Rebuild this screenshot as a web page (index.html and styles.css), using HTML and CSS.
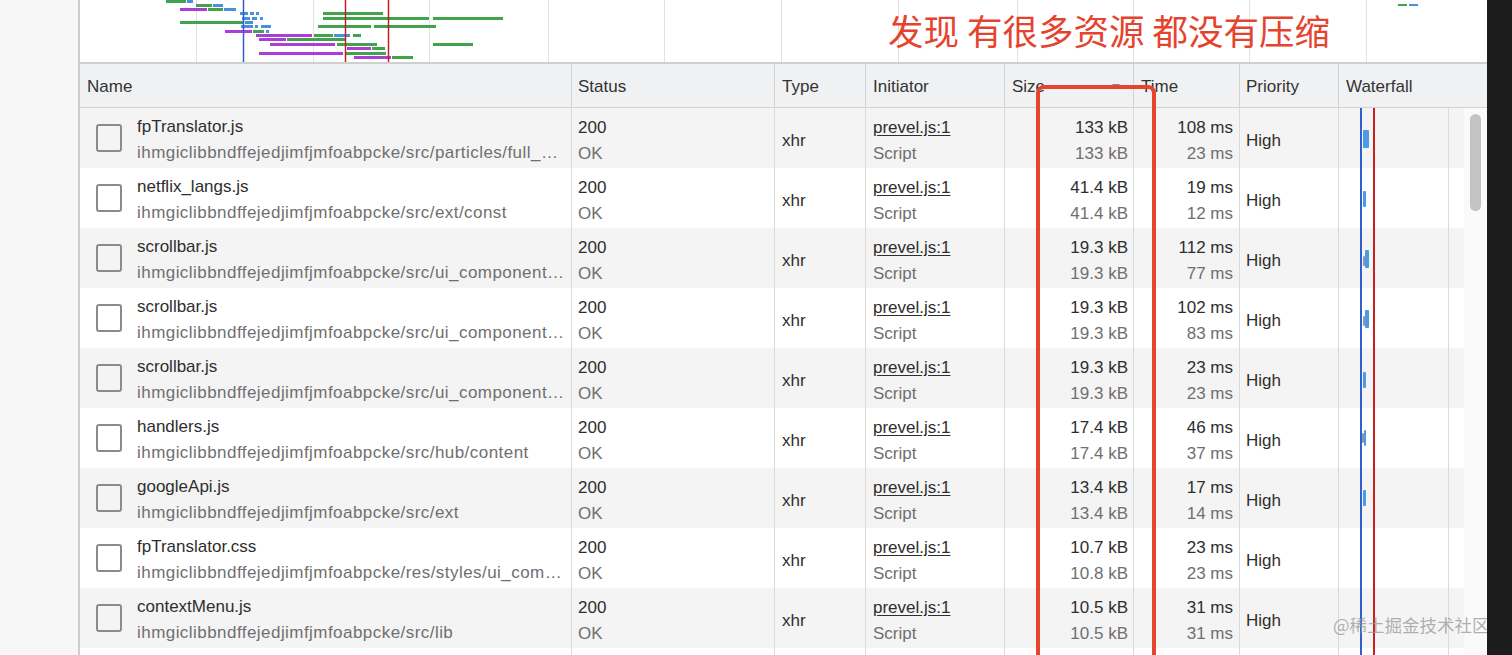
FILE: index.html
```html
<!DOCTYPE html>
<html lang="zh-CN">
<head>
    <meta charset="UTF-8">
    <title>Network</title>
    <link rel="stylesheet" href="styles.css">
</head>
<body>
<div class="page">
    <aside class="sidebar"></aside>

    <main class="panel">
        <div class="overview">
            <svg class="overview-chart" width="1407" height="62" viewBox="0 0 1407 62">
                <g stroke="#e2e2e2" stroke-width="1">
                    <line x1="116.5" y1="0" x2="116.5" y2="62"/>
                    <line x1="233.5" y1="0" x2="233.5" y2="62"/>
                    <line x1="349.5" y1="0" x2="349.5" y2="62"/>
                    <line x1="468.5" y1="0" x2="468.5" y2="62"/>
                    <line x1="584.5" y1="0" x2="584.5" y2="62"/>
                    <line x1="701.5" y1="0" x2="701.5" y2="62"/>
                    <line x1="818.5" y1="0" x2="818.5" y2="62"/>
                    <line x1="937.5" y1="0" x2="937.5" y2="62"/>
                    <line x1="1053.5" y1="0" x2="1053.5" y2="62"/>
                    <line x1="1169.5" y1="0" x2="1169.5" y2="62"/>
                    <line x1="1286.5" y1="0" x2="1286.5" y2="62"/>
                </g>
                <!-- green = waiting, blue = download, purple = queueing -->
                <g fill="#43a34c">
                    <rect x="86" y="0" width="20" height="3"/>
                    <rect x="116" y="4" width="16" height="3"/>
                    <rect x="128" y="8" width="15" height="3"/>
                    <rect x="243" y="12" width="60" height="3"/>
                    <rect x="243" y="17" width="106" height="3"/>
                    <rect x="353" y="17" width="70" height="3"/>
                    <rect x="100" y="21" width="63" height="3"/>
                    <rect x="238" y="25" width="53" height="3"/>
                    <rect x="294" y="25" width="62" height="3"/>
                    <rect x="173" y="30" width="11" height="3"/>
                    <rect x="234" y="34" width="19" height="3"/>
                    <rect x="273" y="34" width="8" height="3"/>
                    <rect x="207" y="38" width="58" height="3"/>
                    <rect x="257" y="43" width="40" height="3"/>
                    <rect x="353" y="43" width="40" height="3"/>
                    <rect x="292" y="47" width="13" height="3"/>
                    <rect x="265" y="52" width="41" height="3"/>
                    <rect x="312" y="56" width="21" height="3"/>
                    <rect x="1318" y="4" width="9" height="2"/>
                </g>
                <g fill="#4a90de">
                    <rect x="107" y="0" width="6" height="3"/>
                    <rect x="133" y="4" width="10" height="3"/>
                    <rect x="144" y="8" width="12" height="3"/>
                    <rect x="160" y="12" width="8" height="3"/>
                    <rect x="170" y="12" width="4" height="3"/>
                    <rect x="176" y="12" width="3" height="3"/>
                    <rect x="162" y="17" width="8" height="3"/>
                    <rect x="172" y="17" width="5" height="3"/>
                    <rect x="180" y="17" width="3" height="3"/>
                    <rect x="165" y="21" width="8" height="3"/>
                    <rect x="161" y="25" width="12" height="3"/>
                    <rect x="175" y="25" width="3" height="3"/>
                    <rect x="181" y="25" width="10" height="3"/>
                    <rect x="186" y="30" width="3" height="3"/>
                    <rect x="254" y="34" width="16" height="3"/>
                    <rect x="1329" y="4" width="9" height="2"/>
                </g>
                <g fill="#aa3fd6">
                    <rect x="100" y="8" width="27" height="3"/>
                    <rect x="145" y="30" width="27" height="3"/>
                    <rect x="176" y="34" width="56" height="3"/>
                    <rect x="179" y="38" width="27" height="3"/>
                    <rect x="190" y="43" width="65" height="3"/>
                    <rect x="267" y="47" width="24" height="3"/>
                    <rect x="179" y="52" width="84" height="3"/>
                    <rect x="274" y="56" width="37" height="3"/>
                </g>
                <line x1="163.5" y1="0" x2="163.5" y2="62" stroke="#2c5fd0" stroke-width="1.5"/>
                <line x1="265.5" y1="0" x2="265.5" y2="62" stroke="#c2201f" stroke-width="1.5"/>
                <line x1="308.5" y1="0" x2="308.5" y2="62" stroke="#c2201f" stroke-width="1.5"/>
            </svg>
            <div class="note">发现 有很多资源 都没有压缩</div>
        </div>

        <div class="table">
            <div class="thead">
                <div class="th">Name</div>
                <div class="th">Status</div>
                <div class="th">Type</div>
                <div class="th">Initiator</div>
                <div class="th th-sorted">Size <span class="sort-arrow"></span></div>
                <div class="th">Time</div>
                <div class="th">Priority</div>
                <div class="th">Waterfall</div>
            </div>

            <div class="tbody">
                <div class="rows">
                    <div class="row">
                        <div class="cell name"><span class="check"></span><div class="two"><div class="main">fpTranslator.js</div><div class="sub path">ihmgiclibbndffejedjimfjmfoabpcke/src/particles/full_screen_translator</div></div></div>
                        <div class="cell"><div class="main">200</div><div class="sub">OK</div></div>
                        <div class="cell mid">xhr</div>
                        <div class="cell"><div class="main link">prevel.js:1</div><div class="sub">Script</div></div>
                        <div class="cell num"><div class="main">133 kB</div><div class="sub">133 kB</div></div>
                        <div class="cell num time"><div class="main">108 ms</div><div class="sub">23 ms</div></div>
                        <div class="cell mid">High</div>
                        <div class="cell wf"><span class="bar" style="left:24px;top:22px;width:6px;height:18px"></span></div>
                    </div>
                    <div class="row">
                        <div class="cell name"><span class="check"></span><div class="two"><div class="main">netflix_langs.js</div><div class="sub path">ihmgiclibbndffejedjimfjmfoabpcke/src/ext/const</div></div></div>
                        <div class="cell"><div class="main">200</div><div class="sub">OK</div></div>
                        <div class="cell mid">xhr</div>
                        <div class="cell"><div class="main link">prevel.js:1</div><div class="sub">Script</div></div>
                        <div class="cell num"><div class="main">41.4 kB</div><div class="sub">41.4 kB</div></div>
                        <div class="cell num time"><div class="main">19 ms</div><div class="sub">12 ms</div></div>
                        <div class="cell mid">High</div>
                        <div class="cell wf"><span class="bar" style="left:24px;top:23px;width:3px;height:16px"></span></div>
                    </div>
                    <div class="row">
                        <div class="cell name"><span class="check"></span><div class="two"><div class="main">scrollbar.js</div><div class="sub path">ihmgiclibbndffejedjimfjmfoabpcke/src/ui_components/scrollbar</div></div></div>
                        <div class="cell"><div class="main">200</div><div class="sub">OK</div></div>
                        <div class="cell mid">xhr</div>
                        <div class="cell"><div class="main link">prevel.js:1</div><div class="sub">Script</div></div>
                        <div class="cell num"><div class="main">19.3 kB</div><div class="sub">19.3 kB</div></div>
                        <div class="cell num time"><div class="main">112 ms</div><div class="sub">77 ms</div></div>
                        <div class="cell mid">High</div>
                        <div class="cell wf"><span class="bar wait" style="left:24px;top:28px;width:2px;height:10px"></span><span class="bar" style="left:26px;top:22px;width:4px;height:18px"></span></div>
                    </div>
                    <div class="row">
                        <div class="cell name"><span class="check"></span><div class="two"><div class="main">scrollbar.js</div><div class="sub path">ihmgiclibbndffejedjimfjmfoabpcke/src/ui_components/scrollbar</div></div></div>
                        <div class="cell"><div class="main">200</div><div class="sub">OK</div></div>
                        <div class="cell mid">xhr</div>
                        <div class="cell"><div class="main link">prevel.js:1</div><div class="sub">Script</div></div>
                        <div class="cell num"><div class="main">19.3 kB</div><div class="sub">19.3 kB</div></div>
                        <div class="cell num time"><div class="main">102 ms</div><div class="sub">83 ms</div></div>
                        <div class="cell mid">High</div>
                        <div class="cell wf"><span class="bar wait" style="left:24px;top:28px;width:2px;height:10px"></span><span class="bar" style="left:26px;top:22px;width:4px;height:18px"></span></div>
                    </div>
                    <div class="row">
                        <div class="cell name"><span class="check"></span><div class="two"><div class="main">scrollbar.js</div><div class="sub path">ihmgiclibbndffejedjimfjmfoabpcke/src/ui_components/scrollbar</div></div></div>
                        <div class="cell"><div class="main">200</div><div class="sub">OK</div></div>
                        <div class="cell mid">xhr</div>
                        <div class="cell"><div class="main link">prevel.js:1</div><div class="sub">Script</div></div>
                        <div class="cell num"><div class="main">19.3 kB</div><div class="sub">19.3 kB</div></div>
                        <div class="cell num time"><div class="main">23 ms</div><div class="sub">23 ms</div></div>
                        <div class="cell mid">High</div>
                        <div class="cell wf"><span class="bar" style="left:24px;top:24px;width:3px;height:16px"></span></div>
                    </div>
                    <div class="row">
                        <div class="cell name"><span class="check"></span><div class="two"><div class="main">handlers.js</div><div class="sub path">ihmgiclibbndffejedjimfjmfoabpcke/src/hub/content</div></div></div>
                        <div class="cell"><div class="main">200</div><div class="sub">OK</div></div>
                        <div class="cell mid">xhr</div>
                        <div class="cell"><div class="main link">prevel.js:1</div><div class="sub">Script</div></div>
                        <div class="cell num"><div class="main">17.4 kB</div><div class="sub">17.4 kB</div></div>
                        <div class="cell num time"><div class="main">46 ms</div><div class="sub">37 ms</div></div>
                        <div class="cell mid">High</div>
                        <div class="cell wf"><span class="bar wait" style="left:23px;top:25px;width:2px;height:10px"></span><span class="bar" style="left:25px;top:22px;width:2px;height:16px"></span></div>
                    </div>
                    <div class="row">
                        <div class="cell name"><span class="check"></span><div class="two"><div class="main">googleApi.js</div><div class="sub path">ihmgiclibbndffejedjimfjmfoabpcke/src/ext</div></div></div>
                        <div class="cell"><div class="main">200</div><div class="sub">OK</div></div>
                        <div class="cell mid">xhr</div>
                        <div class="cell"><div class="main link">prevel.js:1</div><div class="sub">Script</div></div>
                        <div class="cell num"><div class="main">13.4 kB</div><div class="sub">13.4 kB</div></div>
                        <div class="cell num time"><div class="main">17 ms</div><div class="sub">14 ms</div></div>
                        <div class="cell mid">High</div>
                        <div class="cell wf"><span class="bar" style="left:24px;top:22px;width:3px;height:16px"></span></div>
                    </div>
                    <div class="row">
                        <div class="cell name"><span class="check"></span><div class="two"><div class="main">fpTranslator.css</div><div class="sub path">ihmgiclibbndffejedjimfjmfoabpcke/res/styles/ui_components/translator</div></div></div>
                        <div class="cell"><div class="main">200</div><div class="sub">OK</div></div>
                        <div class="cell mid">xhr</div>
                        <div class="cell"><div class="main link">prevel.js:1</div><div class="sub">Script</div></div>
                        <div class="cell num"><div class="main">10.7 kB</div><div class="sub">10.8 kB</div></div>
                        <div class="cell num time"><div class="main">23 ms</div><div class="sub">23 ms</div></div>
                        <div class="cell mid">High</div>
                        <div class="cell wf"></div>
                    </div>
                    <div class="row">
                        <div class="cell name"><span class="check"></span><div class="two"><div class="main">contextMenu.js</div><div class="sub path">ihmgiclibbndffejedjimfjmfoabpcke/src/lib</div></div></div>
                        <div class="cell"><div class="main">200</div><div class="sub">OK</div></div>
                        <div class="cell mid">xhr</div>
                        <div class="cell"><div class="main link">prevel.js:1</div><div class="sub">Script</div></div>
                        <div class="cell num"><div class="main">10.5 kB</div><div class="sub">10.5 kB</div></div>
                        <div class="cell num time"><div class="main">31 ms</div><div class="sub">31 ms</div></div>
                        <div class="cell mid">High</div>
                        <div class="cell wf"></div>
                    </div>
                    <div class="row">
                        <div class="cell name"><span class="check"></span><div class="two"><div class="main">content.js</div><div class="sub path">ihmgiclibbndffejedjimfjmfoabpcke/src/hub</div></div></div>
                        <div class="cell"><div class="main">200</div><div class="sub">OK</div></div>
                        <div class="cell mid">xhr</div>
                        <div class="cell"><div class="main link">prevel.js:1</div><div class="sub">Script</div></div>
                        <div class="cell num"><div class="main">9.8 kB</div><div class="sub">9.8 kB</div></div>
                        <div class="cell num time"><div class="main">20 ms</div><div class="sub">18 ms</div></div>
                        <div class="cell mid">High</div>
                        <div class="cell wf"></div>
                    </div>
                </div>
                <div class="scrolltrack"><div class="thumb"></div></div>
            </div>

            <div class="mark-box"></div>
        </div>

        <div class="watermark">@稀土掘金技术社区</div>
    </main>

    <div class="edge"></div>
</div>
</body>
</html>
```

FILE: styles.css
```css
* {
    margin: 0;
    padding: 0;
    box-sizing: border-box;
}

body {
    width: 1512px;
    height: 655px;
    overflow: hidden;
    font-family: "Liberation Sans", Arial, "Noto Sans CJK SC", sans-serif;
    font-size: 17px;
    color: #2e2e2e;
    background: #fff;
}

.page {
    display: flex;
    height: 655px;
}

.sidebar {
    width: 80px;
    flex-shrink: 0;
    background: #f7f7f7;
    border-right: 2px solid #cdcdcd;
}

.panel {
    position: relative;
    width: 1407px;
    flex-shrink: 0;
    display: flex;
    flex-direction: column;
    overflow: hidden;
}

.edge {
    flex: 1;
    background: #1c1c1c;
}

/* overview strip */
.overview {
    position: relative;
    height: 64px;
    flex-shrink: 0;
    background: #fff;
    border-bottom: 2px solid #cfcfcf;
}

.overview-chart {
    display: block;
}

.note {
    position: absolute;
    left: 808px;
    top: 9px;
    font-family: "Noto Sans CJK SC", sans-serif;
    font-size: 35.5px;
    line-height: 42px;
    color: #e6432e;
    white-space: nowrap;
}

/* table */
.table {
    position: relative;
    flex: 1;
    display: flex;
    flex-direction: column;
}

.thead {
    display: grid;
    grid-template-columns: 492px 203px 91px 139px 129px 106px 99px 1fr;
    height: 44px;
    flex-shrink: 0;
    background: #f0f1f2;
    border-bottom: 1px solid #d2d2d2;
}

.th {
    display: flex;
    align-items: center;
    padding: 3px 0 0 7px;
    border-right: 1px solid #d2d2d2;
    color: #333;
    white-space: nowrap;
}

.th:nth-child(2),
.th:nth-child(7) {
    padding-left: 6px;
}

.th:last-child {
    border-right: none;
}

.th-sorted {
    justify-content: space-between;
    padding-right: 13px;
}

.sort-arrow {
    width: 0;
    height: 0;
    margin-bottom: 2px;
    border-left: 4px solid transparent;
    border-right: 4px solid transparent;
    border-top: 5px solid #8a8a8a;
}

.tbody {
    flex: 1;
    display: flex;
    overflow: hidden;
}

.rows {
    width: 1384px;
    flex-shrink: 0;
}

.row {
    display: grid;
    grid-template-columns: 492px 203px 91px 139px 129px 106px 99px 1fr;
    height: 60px;
    background: #fff;
}

.row:nth-child(odd) {
    background: #f4f4f4;
}

.cell {
    padding: 7px 6px 0 7px;
    border-right: 1px solid #dadada;
    line-height: 26px;
    white-space: nowrap;
    overflow: hidden;
    min-width: 0;
}

.cell:nth-child(2),
.cell:nth-child(7) {
    padding-left: 6px;
}

.cell .sub {
    color: #6f6f6f;
}

.link {
    text-decoration: underline;
    text-underline-offset: 2px;
}

.mid {
    display: flex;
    align-items: center;
    padding-top: 6px;
}

.num {
    text-align: right;
    padding-right: 5px;
}

.num.time {
    padding-right: 6px;
}

.name {
    display: flex;
    align-items: center;
    gap: 15px;
    padding: 0 6px 0 16px;
}

.check {
    width: 26px;
    height: 28px;
    flex-shrink: 0;
    border: 2px solid #8b8b8b;
    border-radius: 3px;
}

.two {
    min-width: 0;
    padding-top: 3px;
}

.two .main,
.two .sub {
    overflow: hidden;
    text-overflow: ellipsis;
}

.path {
    letter-spacing: 0.45px;
}

/* waterfall cell: grid line, DOMContentLoaded and load markers */
.wf {
    position: relative;
    border-right: none;
    background: linear-gradient(#dcdcdc, #dcdcdc) 109px 0 / 1px 100% no-repeat;
}

.wf::before,
.wf::after {
    content: '';
    position: absolute;
    top: 0;
    bottom: 0;
    width: 1.5px;
}

.wf::before {
    left: 21px;
    background: #2f60cc;
}

.wf::after {
    left: 34px;
    background: #c5211f;
}

.bar {
    position: absolute;
    background: #4a9be3;
    border-radius: 1px;
}

.bar.wait {
    background: #8c98a6;
}

.scrolltrack {
    flex: 1;
    background: #fafafa;
    padding: 6px 0 0 6px;
}

.thumb {
    width: 11px;
    height: 97px;
    border-radius: 6px;
    background: #c3c3c3;
}

/* red annotation frame around the Size column */
.mark-box {
    position: absolute;
    left: 956px;
    top: 21px;
    width: 120px;
    height: 700px;
    border: 4px solid #e5452f;
    border-radius: 8px;
}

.watermark {
    position: absolute;
    left: 1253px;
    top: 613px;
    font-family: "Noto Sans CJK SC", sans-serif;
    font-size: 17.5px;
    line-height: 24px;
    color: rgba(150, 150, 150, 0.75);
    white-space: nowrap;
}
```
